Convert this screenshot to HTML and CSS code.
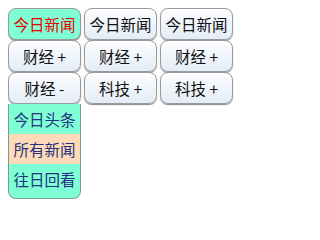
FILE: index.html
```html
<!DOCTYPE html>
<html>
<head>
<meta charset="utf-8">
<link rel="stylesheet" href="styles.css">
</head>
<body>
<div class="cols">
  <div class="col">
    <div class="btn active">今日新闻</div>
    <div class="btn">财经 +</div>
    <div class="btn">财经 -</div>
    <div class="panel">
      <div class="item">今日头条</div>
      <div class="item sel">所有新闻</div>
      <div class="item">往日回看</div>
    </div>
  </div>
  <div class="col">
    <div class="btn">今日新闻</div>
    <div class="btn">财经 +</div>
    <div class="btn">科技 +</div>
  </div>
  <div class="col">
    <div class="btn">今日新闻</div>
    <div class="btn">财经 +</div>
    <div class="btn">科技 +</div>
  </div>
</div>
</body>
</html>
```
FILE: styles.css
```css
body {
  margin: 8px;
  background: #fff;
  font-family: "Noto Sans CJK SC", "DejaVu Sans", sans-serif;
  font-size: 15.5px;
}
.cols {
  display: flex;
  gap: 3px;
  align-items: flex-start;
}
.col {
  width: 73px;
  display: flex;
  flex-direction: column;
}
.btn {
  height: 30px;
  line-height: 30px;
  text-align: center;
  border: 1px solid #9a9a9a;
  border-radius: 8px;
  background: linear-gradient(#fdfeff, #e3ecf7);
  box-shadow: 0 1px 1px #888;
  color: #111;
}
.btn.active {
  background: #7fffd4;
  color: #e00;
}
.panel {
  margin-top: 0;
  background: #7fffd4;
  border: 1px solid #7a9a9a;
  border-top: none;
  border-radius: 0 0 8px 8px;
  padding: 0 0 4px;
}
.item {
  height: 30px;
  line-height: 30px;
  text-align: center;
  color: #22347e;
}
.item.sel {
  background: #ffdab9;
}
```
